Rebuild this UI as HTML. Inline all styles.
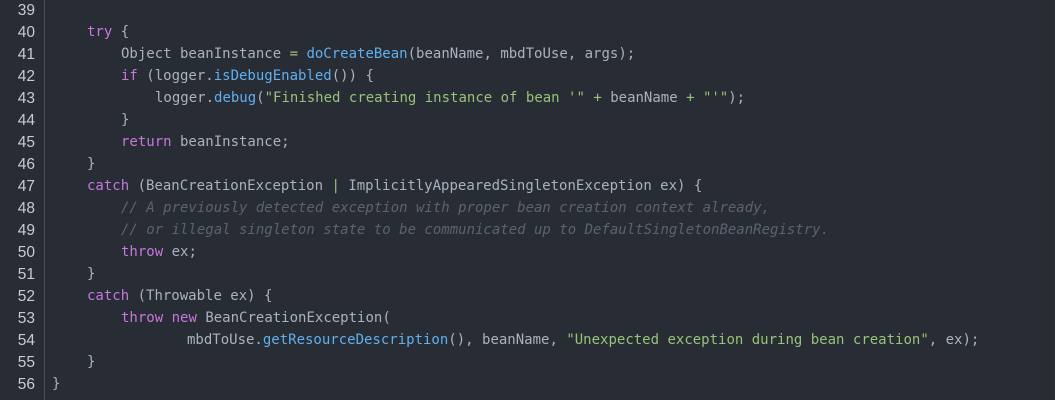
<!DOCTYPE html>
<html><head><style>
html,body{margin:0;padding:0;}
body{width:1055px;height:400px;background:#282c34;overflow:hidden;position:relative;}
.g{position:absolute;left:0;top:0;width:44px;height:400px;border-right:1px solid #4b5059;}
.n{position:absolute;right:1020px;width:40px;text-align:right;font:15.5px "Liberation Sans",sans-serif;color:#c8ccd2;}
.l{position:absolute;font:14px "DejaVu Sans Mono",monospace;color:#abb2bf;white-space:pre;}
.k{color:#c678dd}.f{color:#61afef}.s{color:#98c379}.c{color:#5c6370;font-style:italic}
</style></head><body>
<div class="g"></div>
<div class="n" style="top:2px">39</div>
<div class="n" style="top:24px">40</div>
<div class="n" style="top:46px">41</div>
<div class="n" style="top:68px">42</div>
<div class="n" style="top:90px">43</div>
<div class="n" style="top:112px">44</div>
<div class="n" style="top:134px">45</div>
<div class="n" style="top:156px">46</div>
<div class="n" style="top:178px">47</div>
<div class="n" style="top:200px">48</div>
<div class="n" style="top:222px">49</div>
<div class="n" style="top:244px">50</div>
<div class="n" style="top:266px">51</div>
<div class="n" style="top:288px">52</div>
<div class="n" style="top:310px">53</div>
<div class="n" style="top:332px">54</div>
<div class="n" style="top:354px">55</div>
<div class="n" style="top:376px">56</div>

<div class="l" style="top:24px;left:87px"><span class="k">try</span> {</div>
<div class="l" style="top:46px;left:121px">Object beanInstance <span class="s">=</span> <span class="f">doCreateBean</span>(beanName, mbdToUse, args);</div>
<div class="l" style="top:68px;left:121px"><span class="k">if</span> (logger.<span class="f">isDebugEnabled</span>()) {</div>
<div class="l" style="top:90px;left:155px">logger.<span class="f">debug</span>(<span class="s">"Finished creating instance of bean '"</span> <span class="s">+</span> beanName <span class="s">+</span> <span class="s">"'"</span>);</div>
<div class="l" style="top:112px;left:121px">}</div>
<div class="l" style="top:134px;left:121px"><span class="k">return</span> beanInstance;</div>
<div class="l" style="top:156px;left:87px">}</div>
<div class="l" style="top:178px;left:87px"><span class="k">catch</span> (BeanCreationException <span class="s">|</span> ImplicitlyAppearedSingletonException ex) {</div>
<div class="l c" style="top:200px;left:121px">// A previously detected exception with proper bean creation context already,</div>
<div class="l c" style="top:222px;left:121px">// or illegal singleton state to be communicated up to DefaultSingletonBeanRegistry.</div>
<div class="l" style="top:244px;left:121px"><span class="k">throw</span> ex;</div>
<div class="l" style="top:266px;left:87px">}</div>
<div class="l" style="top:288px;left:87px"><span class="k">catch</span> (Throwable ex) {</div>
<div class="l" style="top:310px;left:121px"><span class="k">throw</span> <span class="k">new</span> BeanCreationException(</div>
<div class="l" style="top:332px;left:187px">mbdToUse.<span class="f">getResourceDescription</span>(), beanName, <span class="s">"Unexpected exception during bean creation"</span>, ex);</div>
<div class="l" style="top:354px;left:87px">}</div>
<div class="l" style="top:376px;left:52px">}</div>
</body></html>
